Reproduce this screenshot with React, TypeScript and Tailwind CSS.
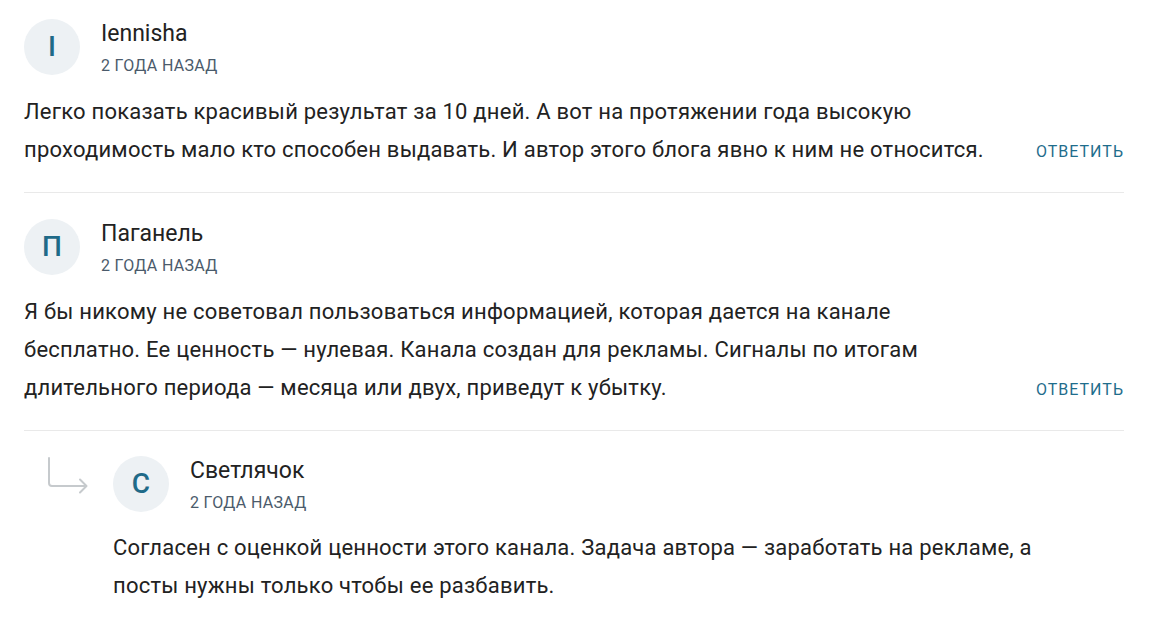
import React from "react";

type Comment = {
  initial: string;
  name: string;
  date: string;
  text: string;
};

const comments: Comment[] = [
  {
    initial: "I",
    name: "Iennisha",
    date: "2 года назад",
    text: "Легко показать красивый результат за 10 дней. А вот на протяжении года высокую проходимость мало кто способен выдавать. И автор этого блога явно к ним не относится.",
  },
  {
    initial: "П",
    name: "Паганель",
    date: "2 года назад",
    text: "Я бы никому не советовал пользоваться информацией, которая дается на канале бесплатно. Ее ценность — нулевая. Канала создан для рекламы. Сигналы по итогам длительного периода — месяца или двух, приведут к убытку.",
  },
];

const reply: Comment = {
  initial: "С",
  name: "Светлячок",
  date: "2 года назад",
  text: "Согласен с оценкой ценности этого канала. Задача автора — заработать на рекламе, а посты нужны только чтобы ее разбавить.",
};

const Header = ({ c }: { c: Comment }) => (
  <div className="flex items-start gap-[21px]">
    <div className="flex h-14 w-14 shrink-0 items-center justify-center rounded-full bg-[#edf1f4] text-[28px] font-medium leading-none text-[#1f6a88]">
      {c.initial}
    </div>
    <div className="mt-[2px] flex flex-col">
      <span className="text-[23px] leading-[26px] text-[#222]">{c.name}</span>
      <span className="mt-[10px] text-[16px] uppercase leading-[18px] tracking-[0.02em] text-[#4b5b6b]">
        {c.date}
      </span>
    </div>
  </div>
);

const ReplyButton = () => (
  <button className="mb-[7px] shrink-0 text-[16px] uppercase leading-[20px] tracking-[1px] text-[#1f6d8c]">
    Ответить
  </button>
);

export default function App() {
  return (
    <div className="min-h-screen bg-white font-['Roboto',sans-serif] text-[#222]">
      <div className="ml-6 w-[1100px]">
        {comments.map((c, i) => (
          <div
            key={c.name}
            className={`${i === 0 ? "pt-[19px]" : "pt-[26px]"} border-b border-[#e9e9e9] pb-[23px]`}
          >
            <Header c={c} />
            <div className="mt-[18px] flex items-end justify-between">
              <p className="w-[968px] text-[22px] leading-[38px] tracking-[0.01em]">{c.text}</p>
              <ReplyButton />
            </div>
          </div>
        ))}

        <div className="flex gap-[24px] pt-[25px]">
          <svg
            width="42"
            height="40"
            viewBox="0 0 42 40"
            fill="none"
            stroke="#c6cacd"
            strokeWidth="2"
            strokeLinecap="round"
            strokeLinejoin="round"
            className="ml-[23px] shrink-0"
          >
            <path d="M2 2v25a3 3 0 0 0 3 3h34" />
            <path d="M33 23.5l6.5 6.5-6.5 6.5" />
          </svg>
          <div className="flex flex-col">
            <Header c={reply} />
            <p className="mt-[17px] w-[960px] text-[22px] leading-[38px] tracking-[0.01em]">{reply.text}</p>
          </div>
        </div>
      </div>
    </div>
  );
}
